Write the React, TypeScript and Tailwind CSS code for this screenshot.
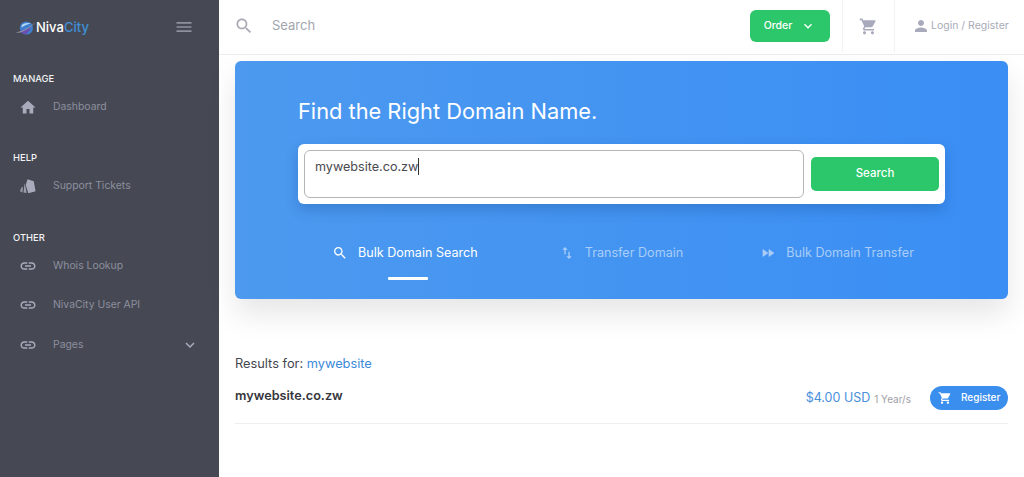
const FONT = "font-['Inter','Noto_Sans',sans-serif]";

const paths = {
  menu: "M3 18h18v-2H3v2zm0-5h18v-2H3v2zm0-7v2h18V6H3z",
  home: "M10 20v-6h4v6h5v-8h3L12 3 2 12h3v8z",
  link: "M3.9 12c0-1.71 1.39-3.1 3.1-3.1h4V7H7c-2.76 0-5 2.24-5 5s2.24 5 5 5h4v-1.9H7c-1.71 0-3.1-1.39-3.1-3.1zM8 13h8v-2H8v2zm9-6h-4v1.9h4c1.71 0 3.1 1.39 3.1 3.1s-1.39 3.1-3.1 3.1h-4V17h4c2.76 0 5-2.24 5-5s-2.24-5-5-5z",
  search:
    "M15.5 14h-.79l-.28-.27C15.41 12.59 16 11.11 16 9.5 16 5.91 13.09 3 9.5 3S3 5.91 3 9.5 5.91 16 9.5 16c1.61 0 3.09-.59 4.23-1.57l.27.28v.79l5 4.99L20.49 19l-4.99-5zm-6 0C7.01 14 5 11.99 5 9.5S7.01 5 9.5 5 14 7.01 14 9.5 11.99 14 9.5 14z",
  cart: "M7 18c-1.1 0-1.99.9-1.99 2S5.9 22 7 22s2-.9 2-2-.9-2-2-2zM1 2v2h2l3.6 7.59-1.35 2.45c-.16.28-.25.61-.25.96 0 1.1.9 2 2 2h12v-2H7.42c-.14 0-.25-.11-.25-.25l.03-.12.9-1.63h7.45c.75 0 1.41-.41 1.75-1.03l3.58-6.49c.08-.14.12-.31.12-.48 0-.55-.45-1-1-1H5.21l-.94-2H1zm16 16c-1.1 0-1.99.9-1.99 2s.89 2 1.99 2 2-.9 2-2-.9-2-2-2z",
  person:
    "M12 12c2.21 0 4-1.79 4-4s-1.79-4-4-4-4 1.79-4 4 1.79 4 4 4zm0 2c-2.67 0-8 1.34-8 4v2h16v-2c0-2.66-5.33-4-8-4z",
  swap: "M16 17.01V10h-2v7.01h-3L15 21l4-3.99h-3zM9 3L5 6.99h3V14h2V6.99h3L9 3z",
  forward: "M4 18l8.5-6L4 6v12zm9-12v12l8.5-6L13 6z",
  chevron: "M16.59 8.59L12 13.17 7.41 8.59 6 10l6 6 6-6z",
};

function Icon({ d, className }: { d: string; className: string }) {
  return (
    <svg viewBox="0 0 24 24" fill="currentColor" className={className}>
      <path d={d} />
    </svg>
  );
}

function TicketsIcon() {
  return (
    <svg viewBox="0 0 20 20" className="w-[18px] h-[18px] text-[#a9abbd]" fill="currentColor">
      <path d="M9.5 2.4 16.4 4.6 18.4 15.8 10.4 18 7.4 9Z" />
      <path d="M6.2 7 5 17.2 8.4 17.8 7.8 14Z" opacity="0.85" />
      <path d="M3.2 10.6 1 15.8 3.8 17.2 4.4 12Z" opacity="0.8" />
    </svg>
  );
}

function Logo() {
  return (
    <div className="flex items-center pt-[1px]">
      <svg viewBox="0 0 24 20" className="w-[21px] h-[18px]">
        <circle cx="13" cy="10" r="7.5" fill="#3f7fd0" />
        <path d="M7.5 7c3-3.2 7.5-3.4 11-2-3 0-7.5 1.4-11 4.4z" fill="#b5d8f5" />
        <path d="M6 12c4 1 8-1 12-4-.6 5-3.5 9-7 9-3 0-4-3-5-5z" fill="#6a4fb0" />
        <path d="M0.5 14.5c6 0 15-4 23-11.5-5 6.5-14 11.5-20 12.5z" fill="#8f97aa" />
      </svg>
      <span className="text-[13px] font-medium text-white leading-none">
        Niva<span className="text-[#3f8fd8]">City</span>
      </span>
    </div>
  );
}

function SideSection({ title, children }: { title: string; children: React.ReactNode }) {
  return (
    <div className="mb-[23.5px]">
      <div className="h-[16px] pl-[13px] text-[9.4px] leading-[16px] font-medium text-[#f1f2f5]">
        {title}
      </div>
      <div className="mt-[0.25px]">{children}</div>
    </div>
  );
}

function SideItem({
  icon,
  label,
  chevron,
}: {
  icon: React.ReactNode;
  label: string;
  chevron?: boolean;
}) {
  return (
    <div className="flex items-center h-[39.5px] pl-[19px] pr-[20px] text-[#8d8f9f]">
      <div className="w-[18px] flex justify-center">{icon}</div>
      <span className="ml-[16px] text-[10.4px] font-normal">{label}</span>
      {chevron && <Icon d={paths.chevron} className="ml-auto w-[18px] h-[18px] text-[#a9abbd]" />}
    </div>
  );
}

function Sidebar() {
  const linkIcon = <Icon d={paths.link} className="w-[18px] h-[18px] text-[#a9abbd]" />;
  return (
    <aside className="w-[219px] shrink-0 bg-[#464953] h-[477px]">
      <div className="flex items-center justify-between h-[54px] pl-[15px] pr-[25px]">
        <Logo />
        <Icon d={paths.menu} className="w-[20px] h-[20px] text-[#8f919e]" />
      </div>
      <div className="pt-[17px]">
        <SideSection title="MANAGE">
          <SideItem icon={<Icon d={paths.home} className="w-[19px] h-[19px] text-[#a9abbd]" />} label="Dashboard" />
        </SideSection>
        <SideSection title="HELP">
          <SideItem icon={<TicketsIcon />} label="Support Tickets" />
        </SideSection>
        <SideSection title="OTHER">
          <SideItem icon={linkIcon} label="Whois Lookup" />
          <SideItem icon={linkIcon} label="NivaCity User API" />
          <SideItem icon={linkIcon} label="Pages" chevron />
        </SideSection>
      </div>
    </aside>
  );
}

function Header() {
  return (
    <header className="flex items-center h-[55px] pb-[2px] border-b border-[#ededf0] bg-white">
      <Icon d={paths.search} className="ml-[15px] w-[20px] h-[20px] text-[#a9a9b4]" />
      <span className="ml-[18px] text-[13px] text-[#a3a5ae]">Search</span>
      <div className="ml-auto mr-[12px] flex items-center justify-center w-[80px] h-[32px] rounded-[6px] bg-[#2cc76a] text-white text-[10.5px] font-medium">
        Order
        <Icon d={paths.chevron} className="ml-[8px] w-[16px] h-[16px]" />
      </div>
      <div className="flex items-center justify-center w-[53px] h-full border-x border-[#f2f2f4]">
        <Icon d={paths.cart} className="w-[19px] h-[19px] text-[#a9abbd]" />
      </div>
      <div className="flex items-center w-[129px] pl-[17px]">
        <Icon d={paths.person} className="w-[18px] h-[18px] text-[#a9abbd]" />
        <span className="ml-[1px] text-[10.5px] text-[#a9abb8]">Login / Register</span>
      </div>
    </header>
  );
}

function Tab({
  icon,
  label,
  active,
  className,
}: {
  icon: string;
  label: string;
  active?: boolean;
  className: string;
}) {
  return (
    <div className={`flex flex-col items-center ${className}`}>
      <div
        className={`flex items-center h-[20px] text-[12.6px] whitespace-nowrap ${active ? "text-white" : "text-[#a9cdf7]"}`}
      >
        <Icon d={icon} className="w-[16px] h-[16px]" />
        <span className="ml-[10px]">{label}</span>
      </div>
      {active && <div className="mt-[14px] w-[40px] h-[3px] bg-white rounded-[1px] ml-[6px]" />}
    </div>
  );
}

function SearchCard() {
  return (
    <section className="mt-[6px] mx-[16px] h-[238px] rounded-[6px] bg-gradient-to-r from-[#4c99ef] to-[#3a8ef4] pt-[35px] pl-[63px] shadow-[0_15px_30px_rgba(0,0,0,0.1)]">
      <h1 className="text-[21.8px] leading-[30px] text-white font-normal">Find the Right Domain Name.</h1>
      <div className="mt-[18px] flex items-center w-[647px] h-[60px] rounded-[6px] bg-white pl-[6px] pr-[6px] shadow-[0_6px_14px_rgba(0,40,100,0.2)]">
        <div className="w-[500px] h-[48px] rounded-[6px] border border-[#b5b5b8] pl-[10px] pt-[7px] flex items-start">
          <span className="text-[12.6px] leading-[18px] text-[#4a4a50]">mywebsite.co.zw</span>
          <span className="w-px h-[17px] bg-[#333]" />
        </div>
        <div className="ml-[7px] flex items-center justify-center w-[128px] h-[34px] rounded-[5px] bg-[#2cc76a] text-white text-[11.5px] font-medium">
          Search
        </div>
      </div>
      <div className="mt-[39px] ml-[34px] flex items-start">
        <Tab icon={paths.search} label="Bulk Domain Search" active className="" />
        <Tab icon={paths.swap} label="Transfer Domain" className="ml-[81px]" />
        <Tab icon={paths.forward} label="Bulk Domain Transfer" className="ml-[77px]" />
      </div>
    </section>
  );
}

function Results() {
  return (
    <section className="mt-[55px] mx-[16px]">
      <p className="text-[12.8px] leading-[20px] text-[#45474f]">
        Results for: <span className="text-[#3b8ad9]">mywebsite</span>
      </p>
      <div className="mt-[12px] flex items-center h-[24px]">
        <span className="mb-[4px] text-[12.7px] font-semibold text-[#35363c]">mywebsite.co.zw</span>
        <span className="ml-auto text-[12.5px] text-[#4a8fdc]">$4.00 USD</span>
        <span className="ml-[4px] mt-[2px] text-[10px] text-[#a0a0a6]">1 Year/s</span>
        <div className="ml-[19px] flex items-center w-[78px] h-[24px] rounded-full bg-[#3a8eed] pl-[8px] pb-[1px] text-white">
          <Icon d={paths.cart} className="w-[14px] h-[14px]" />
          <span className="ml-[9px] text-[10px] font-medium">Register</span>
        </div>
      </div>
      <div className="mt-[13px] border-b border-[#eeeef0]" />
    </section>
  );
}

export default function App() {
  return (
    <div className={`flex w-[1024px] h-[477px] overflow-hidden bg-white ${FONT}`}>
      <Sidebar />
      <main className="flex-1 min-w-0">
        <Header />
        <SearchCard />
        <Results />
      </main>
    </div>
  );
}
